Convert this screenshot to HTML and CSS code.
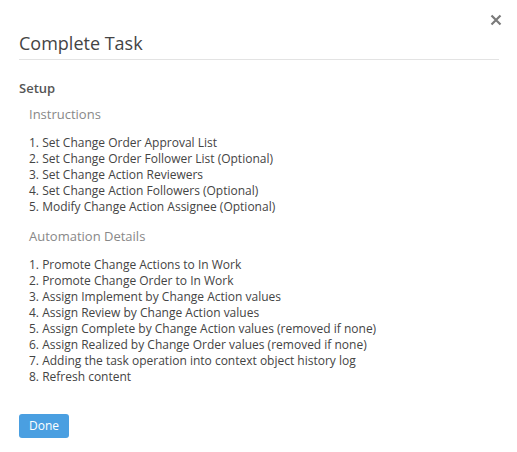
FILE: index.html
```html
<!DOCTYPE html>
<html>
<head>
<meta charset="utf-8">
<link rel="stylesheet" href="styles.css">
</head>
<body>
<div class="dialog">
  <button class="close" aria-label="Close">
    <svg width="12" height="12" viewBox="0 0 12 12"><path d="M1.5 1.5 L10.5 10.5 M10.5 1.5 L1.5 10.5" stroke="#7a7a7a" stroke-width="2.2" stroke-linecap="butt"/></svg>
  </button>
  <h1 class="title">Complete Task</h1>
  <h2 class="section">Setup</h2>
  <h3 class="sub">Instructions</h3>
  <ol class="list">
    <li>1. Set Change Order Approval List</li>
    <li>2. Set Change Order Follower List (Optional)</li>
    <li>3. Set Change Action Reviewers</li>
    <li>4. Set Change Action Followers (Optional)</li>
    <li>5. Modify Change Action Assignee (Optional)</li>
  </ol>
  <h3 class="sub">Automation Details</h3>
  <ol class="list">
    <li>1. Promote Change Actions to In Work</li>
    <li>2. Promote Change Order to In Work</li>
    <li>3. Assign Implement by Change Action values</li>
    <li>4. Assign Review by Change Action values</li>
    <li>5. Assign Complete by Change Action values (removed if none)</li>
    <li>6. Assign Realized by Change Order values (removed if none)</li>
    <li>7. Adding the task operation into context object history log</li>
    <li>8. Refresh content</li>
  </ol>
  <div class="actions">
    <button class="btn-done">Done</button>
  </div>
</div>
</body>
</html>
```
FILE: styles.css
```css
html, body {
  margin: 0;
  padding: 0;
  background: #fff;
}
body {
  font-family: "Open Sans", "Liberation Sans", sans-serif;
  color: #444;
}
.dialog {
  position: relative;
  padding: 31px 18px 0 19px;
}
.close {
  position: absolute;
  top: 14px;
  right: 15px;
  width: 12px;
  height: 12px;
  padding: 0;
  border: 0;
  background: none;
  display: flex;
}
.title {
  margin: 0;
  font-size: 18px;
  line-height: 24px;
  font-weight: 400;
  color: #444;
  padding-bottom: 4px;
  border-bottom: 1px solid #e3e3e3;
}
.section {
  margin: 19px 0 0;
  font-size: 13px;
  line-height: 18px;
  font-weight: 600;
  color: #555;
}
.sub {
  margin: 8px 0 0 10px;
  font-size: 13px;
  line-height: 18px;
  font-weight: 400;
  color: #888;
}
.list + .sub {
  margin-top: 12px;
}
.list {
  list-style: none;
  margin: 12px 0 0 10px;
  padding: 0;
  font-size: 12px;
  line-height: 16px;
  color: #444;
}
.actions {
  margin-top: 29px;
  display: flex;
}
.btn-done {
  width: 50px;
  height: 24px;
  padding: 0;
  border: 0;
  border-radius: 3px;
  background: #4a9fe1;
  color: #fff;
  font-family: "Open Sans", "Liberation Sans", sans-serif;
  font-size: 12px;
  line-height: 24px;
}
```
